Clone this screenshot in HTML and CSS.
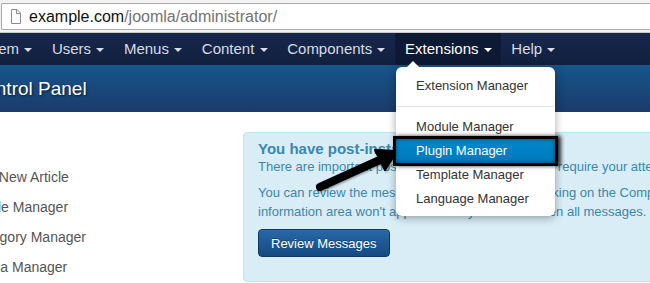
FILE: index.html
```html
<!DOCTYPE html>
<html lang="en">
<head>
  <meta charset="UTF-8" />
  <meta name="viewport" content="width=device-width, initial-scale=1.0"/>
  <title>Control Panel - Administration</title>
  <link rel="stylesheet" href="styles.css">
</head>
<body>

  <div class="chrome">
    <div class="omnibox">
      <svg class="page-icon" width="11" height="15" viewBox="0 0 11 15">
        <path d="M1.5 .5H7L10.5 4V14.5H1.5Z" fill="#fff" stroke="#8c8c8c"/>
        <path d="M6.5 .5V4.5H10.5" fill="none" stroke="#8c8c8c"/>
      </svg>
      <span class="host">example.com</span><span class="path">/joomla/administrator/</span>
    </div>
  </div>

  <nav class="navbar">
    <ul class="nav">
      <li><a href="#">System <b class="caret"></b></a></li>
      <li><a href="#">Users <b class="caret"></b></a></li>
      <li><a href="#">Menus <b class="caret"></b></a></li>
      <li><a href="#">Content <b class="caret"></b></a></li>
      <li><a href="#">Components <b class="caret"></b></a></li>
      <li class="open">
        <a href="#">Extensions <b class="caret"></b></a>
        <ul class="dropdown">
          <li><a href="#">Extension Manager</a></li>
          <li class="divider"></li>
          <li><a href="#">Module Manager</a></li>
          <li><a href="#" class="active">Plugin Manager</a></li>
          <li><a href="#">Template Manager</a></li>
          <li><a href="#">Language Manager</a></li>
        </ul>
      </li>
      <li><a href="#">Help <b class="caret"></b></a></li>
    </ul>
  </nav>

  <header class="subhead">
    <h1>Control Panel</h1>
  </header>

  <main class="content">
    <aside class="sidebar">
      <ul>
        <li><a href="#">Add New Article</a></li>
        <li><a href="#">Article Manager</a></li>
        <li><a href="#">Category Manager</a></li>
        <li><a href="#">Media Manager</a></li>
      </ul>
    </aside>

    <section class="alert">
      <h4>You have post-installation messages</h4>
      <p>There are important post-installation messages that require your attention.</p>
      <p>You can review the messages at a later time by clicking on the Components, Post-installation Messages menu item. This<br>
        information area won't appear when you have hidden all messages.</p>
      <button class="btn">Review Messages</button>
    </section>
  </main>

  <!-- annotation arrow pointing at the plugin manager -->
  <svg class="pointer" width="650" height="283" viewBox="0 0 650 283">
    <line x1="320" y1="187" x2="384" y2="158" stroke="#000" stroke-width="8" stroke-linecap="round"/>
    <polygon points="397,151 375,150 385,170" fill="#000" stroke="#000" stroke-width="2" stroke-linejoin="round"/>
  </svg>

</body>
</html>
```

FILE: styles.css
```css
body {
  margin: 0;
  background: #fff;
  font-family: 'Liberation Sans', Arial, sans-serif;
  overflow: hidden;
  position: relative;
  height: 283px;
}

a {
  text-decoration: none;
  color: inherit;
}

ul {
  list-style: none;
  margin: 0;
  padding: 0;
}

/* browser address bar */
.chrome {
  background: #f2f2f2;
  padding: 3px 0 2px 1px;
  border-bottom: 1px solid #c9c9c9;
}

.omnibox {
  display: flex;
  align-items: center;
  height: 25px;
  background: #fff;
  border: 1px solid #a9a9a9;
  border-right: none;
  border-radius: 2px 0 0 2px;
  padding-left: 8px;
  font-size: 16px;
}

.page-icon {
  margin-right: 8px;
}

.host {
  color: #111;
}

.path {
  color: #737373;
}

/* top menu */
.navbar {
  background: linear-gradient(to bottom, #17284c, #12203e);
  height: 32px;
}

.nav {
  display: flex;
  margin-left: -41px;
}

.nav > li {
  position: relative;
}

.nav > li > a {
  display: block;
  padding: 0 9.7px 0 10px;
  line-height: 32px;
  font-size: 15px;
  color: #d7dce6;
}

.nav > li.open > a {
  background: #0e1a33;
  color: #fff;
}

.caret {
  display: inline-block;
  width: 0;
  height: 0;
  margin-left: 1px;
  vertical-align: middle;
  border-top: 4px solid currentColor;
  border-left: 4px solid transparent;
  border-right: 4px solid transparent;
}

.dropdown {
  position: absolute;
  top: 34px;
  left: 1px;
  width: 159px;
  background: #fff;
  border-radius: 6px;
  padding: 7px 0 5px;
  box-shadow: 0 2px 8px rgba(0, 0, 0, 0.35);
  z-index: 10;
}

.dropdown::before {
  content: "";
  position: absolute;
  top: -6px;
  left: 11px;
  border-bottom: 6px solid #fff;
  border-left: 6px solid transparent;
  border-right: 6px solid transparent;
}

.dropdown a {
  display: block;
  padding: 3px 20px;
  line-height: 18px;
  font-size: 13px;
  color: #333;
  white-space: nowrap;
}

.dropdown .divider {
  height: 1px;
  margin: 8px 1px;
  background: #e3e3e3;
}

.dropdown a.active {
  position: relative;
  background: linear-gradient(to bottom, #0088cc, #0079bb);
  color: #fff;
  box-shadow: 0 0 0 3px #000, 3px 0 4px 3px rgba(0, 0, 0, 0.8), inset 0 0 4px rgba(0, 0, 0, 0.5);
}

/* title bar */
.subhead {
  background: linear-gradient(to bottom, #17558b, #1b3b6b);
  height: 47px;
}

.subhead h1 {
  margin: 0 0 0 -28.5px;
  font-size: 19px;
  font-weight: normal;
  line-height: 47px;
  color: #fff;
  text-shadow: 1px 1px 2px rgba(0, 0, 0, 0.6);
  white-space: nowrap;
}

/* page body */
.content {
  display: flex;
  padding-top: 20px;
}

.sidebar {
  flex: none;
  width: 258px;
  margin-left: -30px;
}

.sidebar ul {
  margin-top: 30px;
}

.sidebar li a {
  display: block;
  padding: 5px 0;
  line-height: 20px;
  font-size: 14px;
  color: #555;
  white-space: nowrap;
}

.alert {
  flex: none;
  width: 760px;
  margin-left: 15px;
  padding: 7px 14px 16px;
  background: #d9edf7;
  border: 1px solid #bce8f1;
  border-radius: 4px;
  color: #3a87ad;
}

.alert h4 {
  margin: 0;
  font-size: 15px;
  line-height: 17px;
}

.alert p {
  margin: 0 0 7px;
  font-size: 13px;
  line-height: 19px;
  white-space: nowrap;
}

.btn {
  margin-top: 1px;
  height: 28px;
  padding: 0 12px;
  font-family: inherit;
  font-size: 13px;
  color: #fff;
  background: linear-gradient(to bottom, #2868a9, #164a80);
  border: 1px solid #0f3966;
  border-radius: 4px;
  text-shadow: 0 -1px 0 rgba(0, 0, 0, 0.3);
  cursor: pointer;
}

.pointer {
  position: absolute;
  top: 0;
  left: 0;
  z-index: 5;
  pointer-events: none;
  filter: drop-shadow(1px 1px 1px rgba(0, 0, 0, 0.4));
}
```
